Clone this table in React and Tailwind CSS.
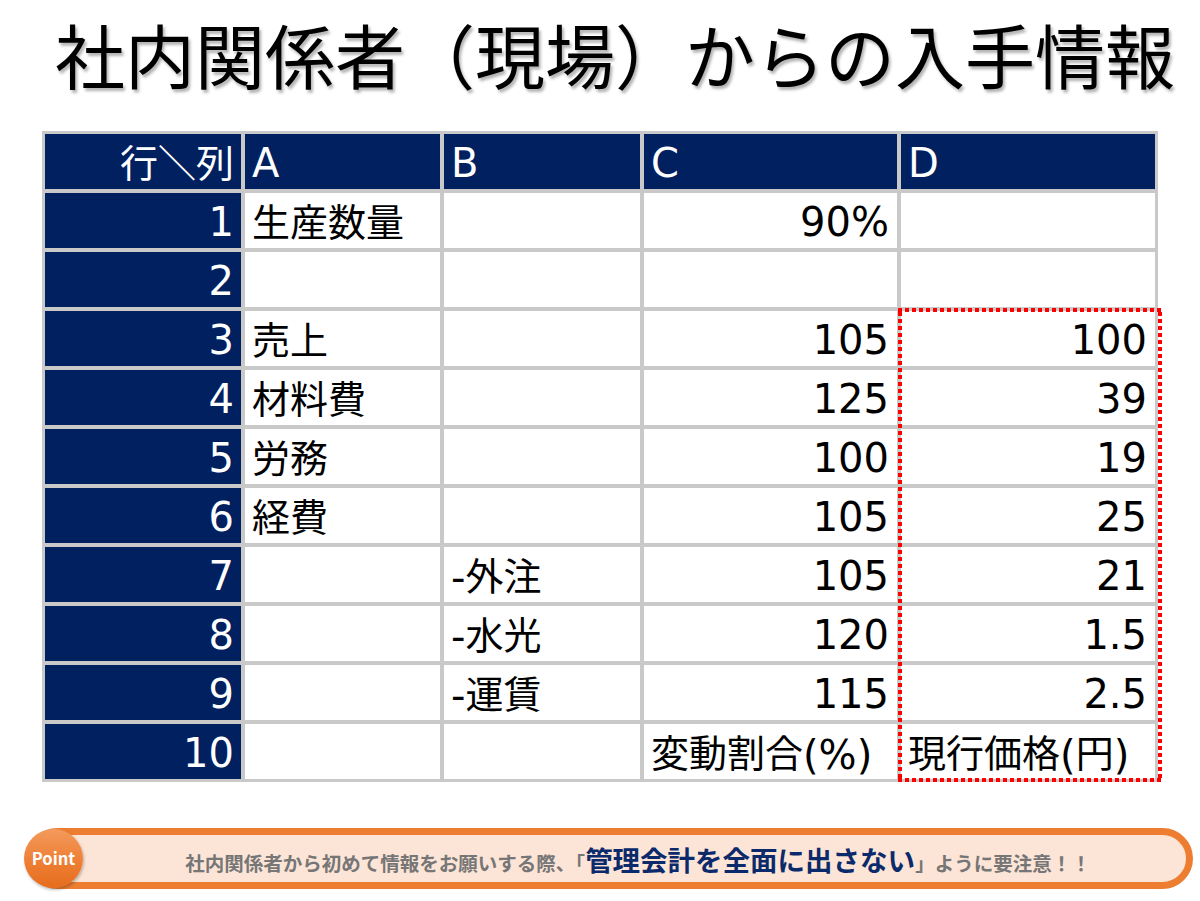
import React from "react";

const cellFont = {
  fontFamily: '"DejaVu Sans", "Noto Sans CJK JP", sans-serif',
};

const rows = [
  { n: "1", a: "生産数量", b: "", c: "90%", d: "" },
  { n: "2", a: "", b: "", c: "", d: "" },
  { n: "3", a: "売上", b: "", c: "105", d: "100" },
  { n: "4", a: "材料費", b: "", c: "125", d: "39" },
  { n: "5", a: "労務", b: "", c: "100", d: "19" },
  { n: "6", a: "経費", b: "", c: "105", d: "25" },
  { n: "7", a: "", b: "-外注", c: "105", d: "21" },
  { n: "8", a: "", b: "-水光", c: "120", d: "1.5" },
  { n: "9", a: "", b: "-運賃", c: "115", d: "2.5" },
  { n: "10", a: "", b: "", c: "変動割合(%)", d: "現行価格(円)", labels: true },
];

// CJK runs are set a bit smaller than the latin digits, like the original
const Mixed = ({ text }) => (
  <span>
    {text.split(/([\u3000-\u9fff\uff00-\uffef]+)/).map((part, i) =>
      /[\u3000-\u9fff\uff00-\uffef]/.test(part) ? (
        <span
          key={i}
          className="text-[38px] align-[2px]"
          style={{ fontFamily: '"Noto Sans CJK JP", sans-serif' }}
        >
          {part}
        </span>
      ) : (
        <span key={i}>{part}</span>
      )
    )}
  </span>
);

const Head = ({ children, right }) => (
  <div
    className={`flex items-center bg-[#002060] text-white pt-[3px] whitespace-nowrap ${
      right ? "justify-end pr-[7px]" : "justify-start pl-[7px]"
    }`}
  >
    <Mixed text={children} />
  </div>
);

const Cell = ({ children, right }) => (
  <div
    className={`flex items-center bg-white text-black pt-[3px] whitespace-nowrap ${
      right ? "justify-end pr-[8px]" : "justify-start pl-[7px]"
    }`}
  >
    <Mixed text={children} />
  </div>
);

const DotsH = () => (
  <div className="h-[4px] bg-[repeating-linear-gradient(90deg,#ff0000_0_4px,transparent_4px_7px)]"></div>
);

const DotsV = () => (
  <div className="w-[4px] bg-[repeating-linear-gradient(180deg,#ff0000_0_4px,transparent_4px_7px)]"></div>
);

export default function App() {
  return (
    <div className="w-[1200px] h-[901px] bg-white flex flex-col overflow-hidden">
      {/* Title */}
      <div className="h-[131px] pt-[14px] pl-[55px]">
        <h1
          className="text-[70px] leading-[80px] font-normal text-black whitespace-nowrap [text-shadow:2px_3px_3px_rgba(0,0,0,0.3)]"
          style={{ fontFamily: '"Noto Sans CJK JP", sans-serif' }}
        >
          社内関係者（現場）からの入手情報
        </h1>
      </div>

      {/* Table */}
      <div className="ml-[42px] grid w-fit">
        <div
          className="[grid-area:1/1] grid grid-cols-[196px_195px_196px_253px_254px] grid-rows-[repeat(11,55px)] gap-[4px] p-[3px] bg-[#c9c9c9] text-[40px] leading-none"
          style={cellFont}
        >
          <Head right>行＼列</Head>
          <Head>A</Head>
          <Head>B</Head>
          <Head>C</Head>
          <Head>D</Head>
          {rows.map((r) => (
            <React.Fragment key={r.n}>
              <Head right>{r.n}</Head>
              <Cell>{r.a}</Cell>
              <Cell>{r.b}</Cell>
              <Cell right={!r.labels}>{r.c}</Cell>
              <Cell right={!r.labels}>{r.d}</Cell>
            </React.Fragment>
          ))}
        </div>

        {/* red dotted frame over column D, rows 3-10 */}
        <div className="[grid-area:1/1] grid grid-cols-[196px_195px_196px_253px_254px] grid-rows-[repeat(11,55px)] gap-[4px] p-[3px] pointer-events-none">
          <div className="col-start-5 row-start-4 row-end-12 -ml-[3px] -mr-[7px] -mt-[3px] -mb-[3px] flex flex-col">
            <DotsH />
            <div className="flex flex-1 justify-between">
              <DotsV />
              <DotsV />
            </div>
            <DotsH />
          </div>
        </div>
      </div>

      {/* Point bar */}
      <div
        className="mt-[46px] flex items-center pr-[7px]"
        style={{ fontFamily: '"Noto Sans CJK JP", sans-serif' }}
      >
        <div className="relative z-10 ml-[24px] w-[59px] h-[59px] shrink-0 rounded-full bg-[linear-gradient(180deg,#f39a5c_0%,#ee7f35_55%,#e56d1e_100%)] shadow-[1px_2px_3px_rgba(0,0,0,0.25)] flex items-center justify-center">
          <span className="text-white text-[16.5px] font-bold leading-none">Point</span>
        </div>
        <div className="-ml-[56px] flex-1 h-[61px] rounded-full border-[7px] border-[#ed7d31] bg-[#fce4d6] flex items-center justify-center pl-[56px]">
          <p className="flex items-baseline whitespace-nowrap font-bold text-[#767676] text-[19.5px] leading-none pt-[2px]">
            <span>社内関係者から初めて情報をお願いする際、「</span>
            <span className="text-[#0b2a6b] text-[27.5px]">管理会計を全面に出さない</span>
            <span>」ように要注意！！</span>
          </p>
        </div>
      </div>
    </div>
  );
}
